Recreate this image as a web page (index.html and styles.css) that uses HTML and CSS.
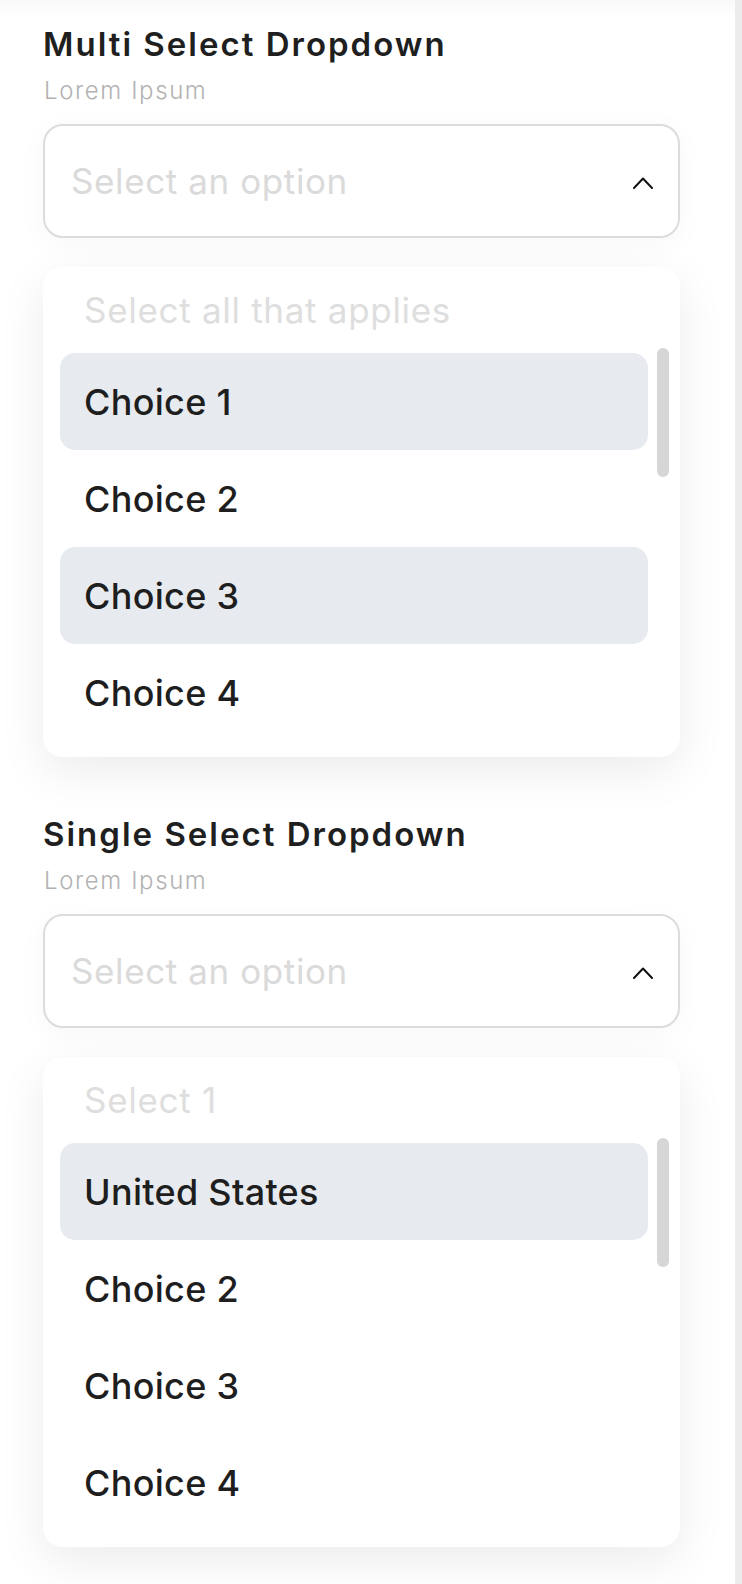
FILE: index.html
```html
<!DOCTYPE html>
<html lang="en">
<head>
<meta charset="utf-8">
<title>Dropdowns</title>
<link rel="stylesheet" href="styles.css">
</head>
<body>
<div class="page">
  <main class="content">
    <section class="field">
      <h2 class="field-title">Multi Select Dropdown</h2>
      <p class="field-sub">Lorem Ipsum</p>
      <div class="select">
        <span class="select-placeholder">Select an option</span>
        <svg class="chevron" width="20" height="12" viewBox="0 0 20 12"><path d="M1 11 L10 1.5 L19 11" fill="none" stroke="#111" stroke-width="2" stroke-linecap="round" stroke-linejoin="round"/></svg>
      </div>
      <div class="panel">
        <div class="panel-hint">Select all that applies</div>
        <ul class="options">
          <li class="option is-selected">Choice 1</li>
          <li class="option">Choice 2</li>
          <li class="option is-selected">Choice 3</li>
          <li class="option">Choice 4</li>
        </ul>
        <div class="scrollbar"></div>
      </div>
    </section>

    <section class="field field-second">
      <h2 class="field-title">Single Select Dropdown</h2>
      <p class="field-sub">Lorem Ipsum</p>
      <div class="select">
        <span class="select-placeholder">Select an option</span>
        <svg class="chevron" width="20" height="12" viewBox="0 0 20 12"><path d="M1 11 L10 1.5 L19 11" fill="none" stroke="#111" stroke-width="2" stroke-linecap="round" stroke-linejoin="round"/></svg>
      </div>
      <div class="panel">
        <div class="panel-hint">Select 1</div>
        <ul class="options">
          <li class="option is-selected">United States</li>
          <li class="option">Choice 2</li>
          <li class="option">Choice 3</li>
          <li class="option">Choice 4</li>
        </ul>
        <div class="scrollbar"></div>
      </div>
    </section>
  </main>
  <div class="edge"></div>
</div>
</body>
</html>
```

FILE: styles.css
```css
* { box-sizing: border-box; }

html, body {
  margin: 0;
  padding: 0;
  background: #ffffff;
}

body {
  font-family: Inter, "Noto Sans", "Liberation Sans", sans-serif;
  color: #1e1e1e;
}

.page {
  display: flex;
  min-height: 1584px;
  background: linear-gradient(to bottom, rgba(0,0,0,0.025), rgba(0,0,0,0) 18px);
}

.content {
  flex: 1;
  padding: 24px 0 0 43px;
}

.edge {
  width: 7px;
  background: #ececec;
}

.field {
  width: 637px;
}

.field-second {
  margin-top: 57px;
}

.field-title {
  margin: 0;
  font-size: 33px;
  line-height: 40px;
  font-weight: 600;
  color: #1f1f1f;
  letter-spacing: 2px;
}

.field-sub {
  margin: 13px 0 0 1px;
  font-size: 24px;
  line-height: 28px;
  font-weight: 300;
  color: #b2b2b2;
  letter-spacing: 1.6px;
}

.select {
  margin-top: 19px;
  height: 114px;
  border: 2px solid #dcdcdc;
  border-radius: 20px;
  background: #fff;
  display: flex;
  align-items: center;
  justify-content: space-between;
  padding: 0 25px 0 26px;
  box-shadow: 0 6px 30px rgba(0,0,0,0.035);
}

.select-placeholder {
  font-size: 35px;
  font-weight: 400;
  color: #dadada;
  letter-spacing: 0.6px;
}

.chevron {
  display: block;
  margin-top: 4px;
}

.panel {
  position: relative;
  margin-top: 29px;
  height: 490px;
  background: #fff;
  border-radius: 20px;
  padding: 22px 32px 16px 17px;
  box-shadow: 0 14px 48px rgba(0,0,0,0.08);
}

.panel-hint {
  height: 42px;
  line-height: 42px;
  font-size: 35px;
  font-weight: 400;
  color: #dedede;
  padding-left: 24px;
  margin-bottom: 22px;
  letter-spacing: 0.7px;
}

.options {
  list-style: none;
  margin: 0;
  padding: 0;
}

.option {
  height: 97px;
  display: flex;
  align-items: center;
  padding-left: 24px;
  font-size: 36px;
  font-weight: 500;
  color: #1e1e1e;
  border-radius: 15px;
  letter-spacing: 0.3px;
}

.option.is-selected {
  background: #e7ebef;
}

.scrollbar {
  position: absolute;
  top: 81px;
  right: 11px;
  width: 12px;
  height: 129px;
  border-radius: 6px;
  background: #d6d6d6;
}
```
